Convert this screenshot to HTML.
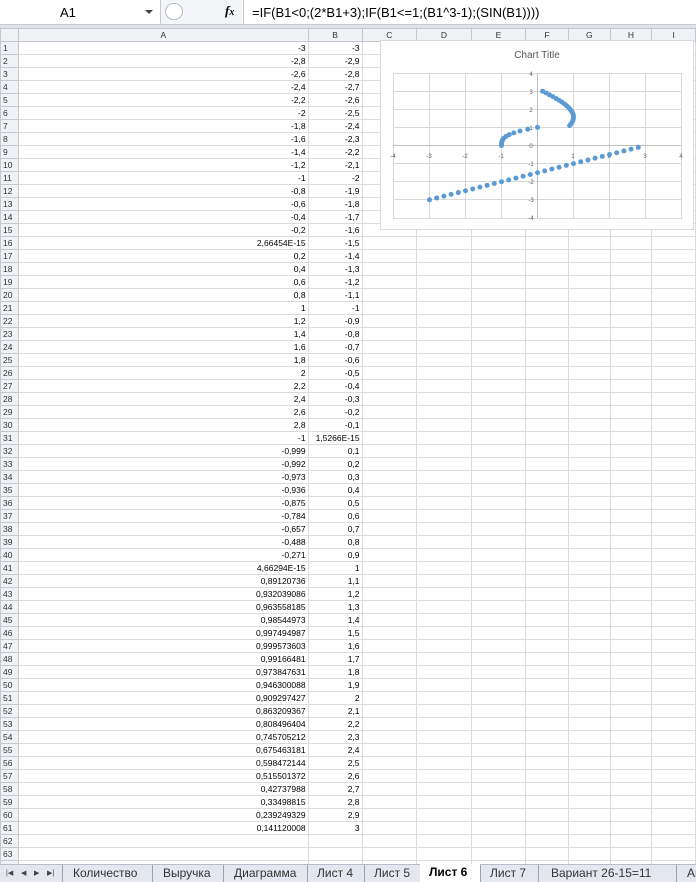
<!DOCTYPE html>
<html><head><meta charset="utf-8"><style>
*{margin:0;padding:0;box-sizing:border-box}
body{width:696px;height:882px;overflow:hidden;background:#fff;font-family:"Liberation Sans",sans-serif;position:relative}
#fb{position:absolute;left:0;top:0;width:696px;height:25px;background:#fff;border-bottom:1px solid #c6cbd2}
#nb{position:absolute;left:0;top:0;width:160px;height:24px;font-size:13px;line-height:25px;padding-left:60px;color:#000}
#ctrl{position:absolute;left:160px;top:0;width:84px;height:24px;background:#f3f5f8;border-left:1px solid #c6cbd2;border-right:1px solid #c6cbd2}
#ff{position:absolute;left:252px;top:0;font-size:13px;line-height:25px;color:#000}
#gap{position:absolute;left:0;top:25px;width:696px;height:3px;background:#dfe3e8}
table{position:absolute;left:0;top:28px;border-collapse:collapse;table-layout:fixed}
td{height:13px;border:1px solid #dadcdd;font-size:8.5px;text-align:right;padding:0 2px;line-height:11px;white-space:nowrap;overflow:hidden;color:#000}
tr.h td{background:#f0f2f5;text-align:center;color:#333;border-color:#c5c9cf;height:13px}
td.n{background:#f0f2f5;text-align:left;color:#333;border-color:#c5c9cf;padding-left:2px}
#chart{position:absolute;left:380px;top:40px;width:314px;height:190px;background:#fff;border:1px solid #d9d9d9}
#ct{position:absolute;left:0;width:100%;top:9px;text-align:center;font-size:10px;color:#595959}
#tabs{position:absolute;left:0;top:864px;width:696px;height:18px;background:#e4e8ee;border-top:1px solid #b8bec7;font-size:12px;color:#333}
.t{position:absolute;top:0;height:17px;line-height:17px;white-space:nowrap}
.nv{position:absolute;top:0;height:17px;line-height:17px;font-size:7px;color:#444}
</style></head><body>
<div id="fb"><div id="nb">A1</div>
<div style="position:absolute;left:145px;top:10px;border-left:4px solid transparent;border-right:4px solid transparent;border-top:4px solid #444"></div>
<div id="ctrl"><div style="position:absolute;left:4px;top:3px;width:18px;height:17px;border-radius:9px;border:1px solid #bbb;background:#fff"></div>
<div style="position:absolute;left:64px;top:3px;font-family:'Liberation Serif',serif;font-style:italic;font-weight:bold;font-size:13px">f<span style="font-size:10px">x</span></div></div>
<div id="ff">=IF(B1&lt;0;(2*B1+3);IF(B1&lt;=1;(B1^3-1);(SIN(B1))))</div></div>
<div id="gap"></div>
<table>
<colgroup><col style="width:18px"><col style="width:292px"><col style="width:54px"><col style="width:55px"><col style="width:55px"><col style="width:55px"><col style="width:43px"><col style="width:42px"><col style="width:42px"><col style="width:44px"></colgroup>
<tr class="h"><td></td><td>A</td><td>B</td><td>C</td><td>D</td><td>E</td><td>F</td><td>G</td><td>H</td><td>I</td></tr>
<tr><td class="n">1</td><td>-3</td><td>-3</td><td></td><td></td><td></td><td></td><td></td><td></td><td></td></tr>
<tr><td class="n">2</td><td>-2,8</td><td>-2,9</td><td></td><td></td><td></td><td></td><td></td><td></td><td></td></tr>
<tr><td class="n">3</td><td>-2,6</td><td>-2,8</td><td></td><td></td><td></td><td></td><td></td><td></td><td></td></tr>
<tr><td class="n">4</td><td>-2,4</td><td>-2,7</td><td></td><td></td><td></td><td></td><td></td><td></td><td></td></tr>
<tr><td class="n">5</td><td>-2,2</td><td>-2,6</td><td></td><td></td><td></td><td></td><td></td><td></td><td></td></tr>
<tr><td class="n">6</td><td>-2</td><td>-2,5</td><td></td><td></td><td></td><td></td><td></td><td></td><td></td></tr>
<tr><td class="n">7</td><td>-1,8</td><td>-2,4</td><td></td><td></td><td></td><td></td><td></td><td></td><td></td></tr>
<tr><td class="n">8</td><td>-1,6</td><td>-2,3</td><td></td><td></td><td></td><td></td><td></td><td></td><td></td></tr>
<tr><td class="n">9</td><td>-1,4</td><td>-2,2</td><td></td><td></td><td></td><td></td><td></td><td></td><td></td></tr>
<tr><td class="n">10</td><td>-1,2</td><td>-2,1</td><td></td><td></td><td></td><td></td><td></td><td></td><td></td></tr>
<tr><td class="n">11</td><td>-1</td><td>-2</td><td></td><td></td><td></td><td></td><td></td><td></td><td></td></tr>
<tr><td class="n">12</td><td>-0,8</td><td>-1,9</td><td></td><td></td><td></td><td></td><td></td><td></td><td></td></tr>
<tr><td class="n">13</td><td>-0,6</td><td>-1,8</td><td></td><td></td><td></td><td></td><td></td><td></td><td></td></tr>
<tr><td class="n">14</td><td>-0,4</td><td>-1,7</td><td></td><td></td><td></td><td></td><td></td><td></td><td></td></tr>
<tr><td class="n">15</td><td>-0,2</td><td>-1,6</td><td></td><td></td><td></td><td></td><td></td><td></td><td></td></tr>
<tr><td class="n">16</td><td>2,66454E-15</td><td>-1,5</td><td></td><td></td><td></td><td></td><td></td><td></td><td></td></tr>
<tr><td class="n">17</td><td>0,2</td><td>-1,4</td><td></td><td></td><td></td><td></td><td></td><td></td><td></td></tr>
<tr><td class="n">18</td><td>0,4</td><td>-1,3</td><td></td><td></td><td></td><td></td><td></td><td></td><td></td></tr>
<tr><td class="n">19</td><td>0,6</td><td>-1,2</td><td></td><td></td><td></td><td></td><td></td><td></td><td></td></tr>
<tr><td class="n">20</td><td>0,8</td><td>-1,1</td><td></td><td></td><td></td><td></td><td></td><td></td><td></td></tr>
<tr><td class="n">21</td><td>1</td><td>-1</td><td></td><td></td><td></td><td></td><td></td><td></td><td></td></tr>
<tr><td class="n">22</td><td>1,2</td><td>-0,9</td><td></td><td></td><td></td><td></td><td></td><td></td><td></td></tr>
<tr><td class="n">23</td><td>1,4</td><td>-0,8</td><td></td><td></td><td></td><td></td><td></td><td></td><td></td></tr>
<tr><td class="n">24</td><td>1,6</td><td>-0,7</td><td></td><td></td><td></td><td></td><td></td><td></td><td></td></tr>
<tr><td class="n">25</td><td>1,8</td><td>-0,6</td><td></td><td></td><td></td><td></td><td></td><td></td><td></td></tr>
<tr><td class="n">26</td><td>2</td><td>-0,5</td><td></td><td></td><td></td><td></td><td></td><td></td><td></td></tr>
<tr><td class="n">27</td><td>2,2</td><td>-0,4</td><td></td><td></td><td></td><td></td><td></td><td></td><td></td></tr>
<tr><td class="n">28</td><td>2,4</td><td>-0,3</td><td></td><td></td><td></td><td></td><td></td><td></td><td></td></tr>
<tr><td class="n">29</td><td>2,6</td><td>-0,2</td><td></td><td></td><td></td><td></td><td></td><td></td><td></td></tr>
<tr><td class="n">30</td><td>2,8</td><td>-0,1</td><td></td><td></td><td></td><td></td><td></td><td></td><td></td></tr>
<tr><td class="n">31</td><td>-1</td><td>1,5266E-15</td><td></td><td></td><td></td><td></td><td></td><td></td><td></td></tr>
<tr><td class="n">32</td><td>-0,999</td><td>0,1</td><td></td><td></td><td></td><td></td><td></td><td></td><td></td></tr>
<tr><td class="n">33</td><td>-0,992</td><td>0,2</td><td></td><td></td><td></td><td></td><td></td><td></td><td></td></tr>
<tr><td class="n">34</td><td>-0,973</td><td>0,3</td><td></td><td></td><td></td><td></td><td></td><td></td><td></td></tr>
<tr><td class="n">35</td><td>-0,936</td><td>0,4</td><td></td><td></td><td></td><td></td><td></td><td></td><td></td></tr>
<tr><td class="n">36</td><td>-0,875</td><td>0,5</td><td></td><td></td><td></td><td></td><td></td><td></td><td></td></tr>
<tr><td class="n">37</td><td>-0,784</td><td>0,6</td><td></td><td></td><td></td><td></td><td></td><td></td><td></td></tr>
<tr><td class="n">38</td><td>-0,657</td><td>0,7</td><td></td><td></td><td></td><td></td><td></td><td></td><td></td></tr>
<tr><td class="n">39</td><td>-0,488</td><td>0,8</td><td></td><td></td><td></td><td></td><td></td><td></td><td></td></tr>
<tr><td class="n">40</td><td>-0,271</td><td>0,9</td><td></td><td></td><td></td><td></td><td></td><td></td><td></td></tr>
<tr><td class="n">41</td><td>4,66294E-15</td><td>1</td><td></td><td></td><td></td><td></td><td></td><td></td><td></td></tr>
<tr><td class="n">42</td><td>0,89120736</td><td>1,1</td><td></td><td></td><td></td><td></td><td></td><td></td><td></td></tr>
<tr><td class="n">43</td><td>0,932039086</td><td>1,2</td><td></td><td></td><td></td><td></td><td></td><td></td><td></td></tr>
<tr><td class="n">44</td><td>0,963558185</td><td>1,3</td><td></td><td></td><td></td><td></td><td></td><td></td><td></td></tr>
<tr><td class="n">45</td><td>0,98544973</td><td>1,4</td><td></td><td></td><td></td><td></td><td></td><td></td><td></td></tr>
<tr><td class="n">46</td><td>0,997494987</td><td>1,5</td><td></td><td></td><td></td><td></td><td></td><td></td><td></td></tr>
<tr><td class="n">47</td><td>0,999573603</td><td>1,6</td><td></td><td></td><td></td><td></td><td></td><td></td><td></td></tr>
<tr><td class="n">48</td><td>0,99166481</td><td>1,7</td><td></td><td></td><td></td><td></td><td></td><td></td><td></td></tr>
<tr><td class="n">49</td><td>0,973847631</td><td>1,8</td><td></td><td></td><td></td><td></td><td></td><td></td><td></td></tr>
<tr><td class="n">50</td><td>0,946300088</td><td>1,9</td><td></td><td></td><td></td><td></td><td></td><td></td><td></td></tr>
<tr><td class="n">51</td><td>0,909297427</td><td>2</td><td></td><td></td><td></td><td></td><td></td><td></td><td></td></tr>
<tr><td class="n">52</td><td>0,863209367</td><td>2,1</td><td></td><td></td><td></td><td></td><td></td><td></td><td></td></tr>
<tr><td class="n">53</td><td>0,808496404</td><td>2,2</td><td></td><td></td><td></td><td></td><td></td><td></td><td></td></tr>
<tr><td class="n">54</td><td>0,745705212</td><td>2,3</td><td></td><td></td><td></td><td></td><td></td><td></td><td></td></tr>
<tr><td class="n">55</td><td>0,675463181</td><td>2,4</td><td></td><td></td><td></td><td></td><td></td><td></td><td></td></tr>
<tr><td class="n">56</td><td>0,598472144</td><td>2,5</td><td></td><td></td><td></td><td></td><td></td><td></td><td></td></tr>
<tr><td class="n">57</td><td>0,515501372</td><td>2,6</td><td></td><td></td><td></td><td></td><td></td><td></td><td></td></tr>
<tr><td class="n">58</td><td>0,42737988</td><td>2,7</td><td></td><td></td><td></td><td></td><td></td><td></td><td></td></tr>
<tr><td class="n">59</td><td>0,33498815</td><td>2,8</td><td></td><td></td><td></td><td></td><td></td><td></td><td></td></tr>
<tr><td class="n">60</td><td>0,239249329</td><td>2,9</td><td></td><td></td><td></td><td></td><td></td><td></td><td></td></tr>
<tr><td class="n">61</td><td>0,141120008</td><td>3</td><td></td><td></td><td></td><td></td><td></td><td></td><td></td></tr>
<tr><td class="n">62</td><td></td><td></td><td></td><td></td><td></td><td></td><td></td><td></td><td></td></tr>
<tr><td class="n">63</td><td></td><td></td><td></td><td></td><td></td><td></td><td></td><td></td><td></td></tr>
<tr><td class="n">64</td><td></td><td></td><td></td><td></td><td></td><td></td><td></td><td></td><td></td></tr>
</table>
<div id="chart"><div id="ct">Chart Title</div></div>
<svg id="sv" width="696" height="882" style="position:absolute;left:0;top:0" font-family="Liberation Sans" font-size="6" fill="#595959">
<g stroke="#d9d9d9" stroke-width="1" fill="none">
<rect x="393.5" y="73.5" width="288" height="145"/>
<path d="M429.5 73V218M465.5 73V218M501.5 73V218M573.5 73V218M609.5 73V218M645.5 73V218M393 91.5H681M393 109.5H681M393 127.5H681M393 163.5H681M393 181.5H681M393 199.5H681"/>
<path d="M537.5 73V218M393 145.5H681" stroke="#bfbfbf"/>
</g>
<g text-anchor="middle">
<text x="393" y="158">-4</text><text x="429" y="158">-3</text><text x="465" y="158">-2</text><text x="501" y="158">-1</text><text x="573" y="158">1</text><text x="609" y="158">2</text><text x="645" y="158">3</text><text x="681" y="158">4</text>
<text x="531" y="76">4</text><text x="531" y="94">3</text><text x="531" y="112">2</text><text x="531" y="130">1</text><text x="531" y="148">0</text><text x="531" y="166">-1</text><text x="531" y="184">-2</text><text x="531" y="202">-3</text><text x="531" y="220">-4</text>
</g>
<g id="pts" fill="#5b9bd5"></g>
</svg>
<script>
var A=[],B=[];
for(var k=0;k<30;k++){A.push(-3+0.2*k);B.push(-3+0.1*k);}
[-1,-0.999,-0.992,-0.973,-0.936,-0.875,-0.784,-0.657,-0.488,-0.271].forEach(function(v,i){A.push(v);B.push(i*0.1);});
A.push(0);B.push(1);
for(var i=1;i<=20;i++){var b=1+i*0.1;A.push(Math.sin(b));B.push(b);}
var s='';for(var j=0;j<A.length;j++){s+='<circle cx="'+(537.5+A[j]*36)+'" cy="'+(145.5-B[j]*18.1)+'" r="2.5"/>';}
document.getElementById('pts').innerHTML=s;
</script>
<div id="tabs">
<div class="nv" style="left:6px">|◀</div>
<div class="nv" style="left:21px">◀</div>
<div class="nv" style="left:34px">▶</div>
<div class="nv" style="left:47px">▶|</div>
<div class="t" style="left:62px;padding:0 10px;border-left:1px solid #9aa3ae">Количество</div>
<div class="t" style="left:152px;padding:0 10px;border-left:1px solid #9aa3ae">Выручка</div>
<div class="t" style="left:223px;padding:0 10px;border-left:1px solid #9aa3ae">Диаграмма</div>
<div class="t" style="left:307px;padding:0 9px;border-left:1px solid #9aa3ae">Лист 4</div>
<div class="t" style="left:364px;padding:0 9px;border-left:1px solid #9aa3ae">Лист 5</div>
<div class="t" style="left:420px;width:60px;padding-left:9px;background:#fff;font-weight:bold;color:#000;top:-1px;height:18px">Лист 6</div>
<div class="t" style="left:480px;padding:0 9px;border-left:1px solid #9aa3ae">Лист 7</div>
<div class="t" style="left:538px;padding:0 12px;border-left:1px solid #9aa3ae">Вариант 26-15=11</div>
<div class="t" style="left:676px;padding:0 10px;border-left:1px solid #9aa3ae">Ан</div>
</div>
</body></html>
